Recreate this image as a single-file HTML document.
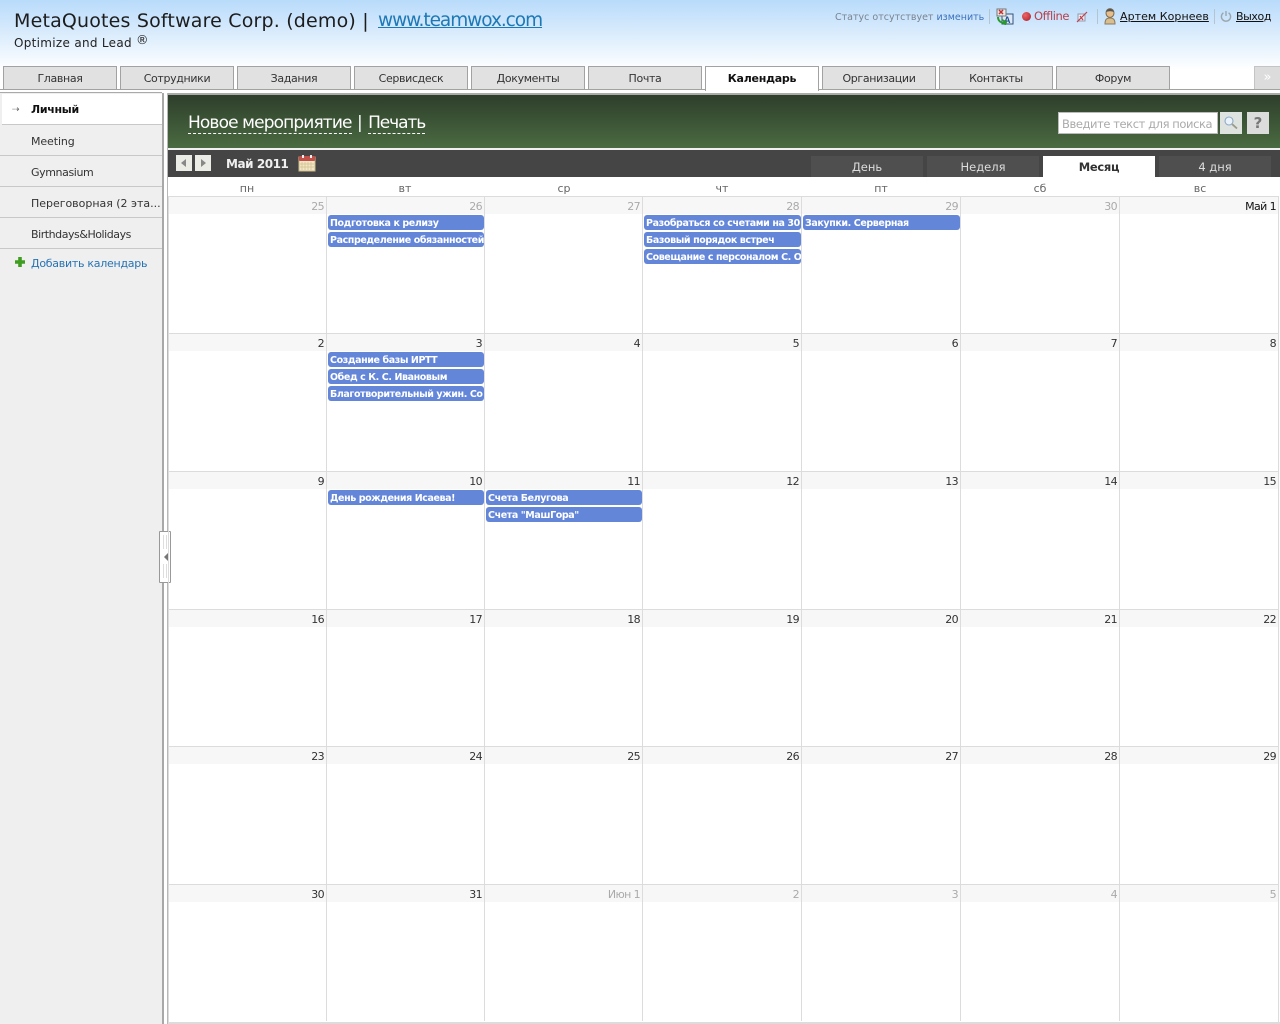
<!DOCTYPE html>
<html><head><meta charset="utf-8"><title>Calendar</title>
<style>
html,body{margin:0;padding:0;background:#fff;width:1280px;height:1024px;overflow:hidden}
body{position:relative;font-family:"DejaVu Sans","Liberation Sans",sans-serif;font-size:11px;color:#222}
.a,.t,.n,.e,.l,.s,.w,.m{position:absolute;white-space:nowrap}
.t{top:66px;width:112px;height:22px;background:#e1e1e1;border:1px solid #a2a2a2;border-bottom:0;text-align:center;line-height:24px;font-size:11px;letter-spacing:-.35px;color:#333}
.n{font-size:11px;text-align:right;width:60px;line-height:14px;color:#333;letter-spacing:-.6px}
.g{color:#aaa}
.e{height:15px;background:#6486d9;border-radius:3px;color:#fff;font:bold 9.5px/17px "DejaVu Sans",sans-serif;letter-spacing:-.4px;overflow:hidden;padding-left:2px;box-sizing:border-box}
.l{background:#dcdcdc}
.s{left:169px;width:1109px;height:17px;background:#f7f7f7}
.w{top:182px;font-size:11px;line-height:14px;color:#666;text-align:center;width:60px}
.m{left:0;width:162px;height:31px;border-bottom:1px solid #c8c8c8;font-size:11px;line-height:34px;padding-left:31px;box-sizing:border-box;letter-spacing:-.1px;color:#333}
.d{position:absolute;top:156px;width:112px;height:21px;background:#4f4f4f;color:#ddd;text-align:center;line-height:22px;font-size:11.5px}
</style></head><body>
<div class="a" style="left:0;top:0;width:1280px;height:70px;background:linear-gradient(#b8dbfb 0,#d6eafc 30px,#fff 70px)"></div>
<div class="a" style="left:14px;top:9px;font-size:19px;line-height:24px;color:#1d1d1d;letter-spacing:.18px">MetaQuotes Software Corp. (demo) | </div>
<div class="a" style="left:378px;top:9px;font-size:18.500px;line-height:24px;letter-spacing:-1.05px;color:#1c79b6;text-decoration:underline">www.teamwox.com</div>
<div class="a" style="left:14px;top:31px;font-size:12px;line-height:24px;color:#222;letter-spacing:.3px">Optimize and Lead</div>
<div class="a" style="left:136px;top:32px;font-size:12.500px;line-height:16px;color:#222">®</div>

<div class="a" style="left:835px;top:11px;font-size:9.5px;line-height:14px;color:#7a8490">Статус отсутствует <span style="color:#3c72bd">изменить</span></div>
<div class="l" style="position:absolute;left:989px;top:9px;width:1px;height:15px;background:#b4c4d0"></div>
<svg class="a" style="left:996px;top:8px" width="18" height="17" viewBox="0 0 18 17"><rect x="6" y="6" width="11" height="10" fill="#dfe9f5" stroke="#33537c"/><text x="8" y="15" font-size="9" font-weight="bold" font-family="Liberation Sans" fill="#1d4f94">A</text><rect x="1" y="1" width="9" height="7" fill="#e8e8e8" stroke="#777"/><path d="M3 2l4 4M7 2L3 6" stroke="#c83030" stroke-width="1.5"/><path d="M2 9c0 4 3 6 7 6l-1-2 2 1-1 3" fill="none" stroke="#2a9a2a" stroke-width="2"/></svg>
<div class="a" style="left:1022px;top:12px;width:9px;height:9px;border-radius:50%;background:radial-gradient(circle at 35% 35%,#e66,#a81c28)"></div>
<div class="a" style="left:1034px;top:9px;font-size:11.5px;line-height:15px;color:#b8404c;letter-spacing:-.4px">Offline</div>
<svg class="a" style="left:1076px;top:11px" width="12" height="12" viewBox="0 0 12 12"><path d="M2 3h7v7H2z" fill="#e8eef5" stroke="#99a"/><path d="M1 11L11 1M4 5l3 4" stroke="#c0404c" stroke-width="1.2" fill="none"/></svg>
<div class="a" style="left:1097px;top:9px;width:1px;height:15px;background:#b4c4d0"></div>
<svg class="a" style="left:1103px;top:8px" width="14" height="17" viewBox="0 0 14 17"><ellipse cx="7" cy="5" rx="4" ry="4.4" fill="#e8bd8c" stroke="#7a6a50"/><path d="M3 4c1-4 7-4 8 0-3-1-5-1-8 0z" fill="#555"/><path d="M2 16c0-5 2-6 5-6s5 1 5 6z" fill="#d9bf8f" stroke="#8a7a60"/></svg>
<div class="a" style="left:1120px;top:10px;font-size:11px;line-height:14px;color:#111;text-decoration:underline;letter-spacing:.05px">Артем Корнеев</div>
<div class="a" style="left:1214px;top:9px;width:1px;height:15px;background:#b4c4d0"></div>
<svg class="a" style="left:1220px;top:10px" width="12" height="12" viewBox="0 0 12 12"><path d="M3.4 2.8a4.6 4.6 0 1 0 5.2 0" fill="none" stroke="#9aa6ad" stroke-width="1.4"/><path d="M6 1v5" stroke="#9aa6ad" stroke-width="1.4"/></svg>
<div class="a" style="left:1236px;top:10px;font-size:11px;line-height:14px;color:#111;text-decoration:underline;letter-spacing:-.4px">Выход</div>

<div class="t" style="left:3px">Главная</div>
<div class="t" style="left:120px">Сотрудники</div>
<div class="t" style="left:237px">Задания</div>
<div class="t" style="left:354px">Сервисдеск</div>
<div class="t" style="left:471px">Документы</div>
<div class="t" style="left:588px">Почта</div>
<div class="t" style="left:822px">Организации</div>
<div class="t" style="left:939px">Контакты</div>
<div class="t" style="left:1056px">Форум</div>
<div class="a" style="left:0;top:89px;width:1280px;height:1px;background:#a2a2a2"></div>
<div class="t" style="left:705px;height:24px;background:#fff;font-weight:bold;color:#111;letter-spacing:-.25px">Календарь</div>
<div class="a" style="left:1254px;top:66px;width:25px;height:22px;background:#dcdcdc;border:1px solid #c4c4c4;border-right:0;border-bottom:0;text-align:center;color:#fff;font-size:13px;line-height:22px">»</div>

<div class="a" style="left:0;top:93px;width:162px;height:931px;background:#efefef"></div>
<div class="a" style="left:162px;top:93px;width:2px;height:931px;background:#a8a8a8"></div>
<div class="a" style="left:167px;top:93px;width:1px;height:931px;background:#b8b8b8"></div>
<div class="a" style="left:164px;top:93px;width:3px;height:931px;background:#fff"></div>
<div class="a" style="left:168px;top:93px;width:1112px;height:2px;background:#aaa"></div>
<div class="a" style="left:0;top:92px;width:162px;height:1px;background:#aaa"></div>

<div class="m" style="top:94px;left:2px;width:160px;background:#fff;font-weight:bold;padding-left:29px;color:#111;letter-spacing:-.3px;line-height:31px">Личный</div>
<div class="a" style="left:12px;top:103px;font-size:9px;line-height:14px;color:#666">⇢</div>
<div class="m" style="top:125px">Meeting</div>
<div class="m" style="top:156px;letter-spacing:-.4px">Gymnasium</div>
<div class="m" style="top:187px;letter-spacing:-.02px">Переговорная (2 эта...</div>
<div class="m" style="top:218px;letter-spacing:-.45px">Birthdays&amp;Holidays</div>
<div class="a" style="left:31px;top:250px;font-size:11px;line-height:28px;color:#2673b5;letter-spacing:-.27px">Добавить календарь</div>
<svg class="a" style="left:15px;top:257px" width="10" height="10" viewBox="0 0 10 10"><path d="M3.2 0h3.6v3.2H10v3.6H6.800V10H3.200V6.800H0V3.200h3.200z" fill="#3f9e1f"/></svg>

<div class="a" style="left:159px;top:531px;width:10px;height:50px;background:#fff;border:1px solid #999;border-radius:1px"></div>
<div class="a" style="left:164px;top:553px;width:0;height:0;border:4px solid transparent;border-left:0;border-right:4px solid #777"></div>
<div class="a" style="left:163px;top:535px;width:1px;height:14px;background:#ddd"></div>
<div class="a" style="left:166px;top:535px;width:1px;height:14px;background:#ddd"></div>
<div class="a" style="left:163px;top:564px;width:1px;height:14px;background:#ddd"></div>
<div class="a" style="left:166px;top:564px;width:1px;height:14px;background:#ddd"></div>

<div class="a" style="left:168px;top:95px;width:1112px;height:53px;background:linear-gradient(#2e3e2b,#4a6b41)"></div>
<div class="a" style="left:188px;top:111px;font-size:17px;line-height:24px;color:#fff;letter-spacing:-.88px"><span style="border-bottom:1px dashed #fff">Новое мероприятие</span><span style="letter-spacing:0"> | </span><span style="border-bottom:1px dashed #fff;letter-spacing:-1.1px">Печать</span></div>
<div class="a" style="left:1058px;top:112px;width:155px;height:20px;background:#fff;border:1px solid #bbb;padding-left:3px;font-size:11.5px;line-height:23px;color:#aaa;letter-spacing:-.42px;overflow:hidden">Введите текст для поиска</div>
<div class="a" style="left:1220px;top:112px;width:22px;height:22px;background:#dfe3e0"></div>
<svg class="a" style="left:1222px;top:114px" width="18" height="18" viewBox="0 0 18 18"><circle cx="7" cy="7" r="4" fill="#eaf3fb" stroke="#8fa9c4" stroke-width="1.100"/><path d="M10.200 10.200l4.800 4.300" stroke="#9a9a8a" stroke-width="1.800"/></svg>
<div class="a" style="left:1247px;top:112px;width:22px;height:22px;background:#dcdcdc;text-align:center;font-weight:bold;font-size:15px;line-height:22px;color:#777">?</div>

<div class="a" style="left:168px;top:148px;width:1112px;height:2px;background:#f0f0f0"></div>
<div class="a" style="left:168px;top:150px;width:1112px;height:27px;background:#454545"></div>
<div class="a" style="left:176px;top:155px;width:16px;height:16px;background:#ecece6"></div>
<div class="a" style="left:181px;top:159px;width:0;height:0;border:4px solid transparent;border-left:0;border-right:5px solid #888"></div>
<div class="a" style="left:195px;top:155px;width:16px;height:16px;background:#ecece6"></div>
<div class="a" style="left:201px;top:159px;width:0;height:0;border:4px solid transparent;border-right:0;border-left:5px solid #888"></div>
<div class="a" style="left:226px;top:157px;font-weight:bold;font-size:12px;line-height:15px;color:#f0f0f0;letter-spacing:-.45px">Май 2011</div>
<svg class="a" style="left:298px;top:154px" width="18" height="18" viewBox="0 0 18 18"><rect x="1" y="3" width="16" height="14" fill="#f2e6c4" stroke="#c9b98a"/><rect x="1" y="2" width="16" height="5" rx="1" fill="#c2504a"/><path d="M5 1v3M13 1v3" stroke="#eee" stroke-width="2"/><path d="M4 8v8M7 8v8M10 8v8M13 8v8M2 10h14M2 13h14" stroke="#d0c090" stroke-width=".7"/></svg>
<div class="d" style="left:811px">День</div>
<div class="d" style="left:927px">Неделя</div>
<div class="d" style="left:1043px;background:#fff;color:#333;font-weight:bold;letter-spacing:-.3px">Месяц</div>
<div class="d" style="left:1159px">4 дня</div>

<div class="w" style="left:217px">пн</div><div class="w" style="left:375px">вт</div><div class="w" style="left:534px">ср</div><div class="w" style="left:692px">чт</div><div class="w" style="left:851px">пт</div><div class="w" style="left:1010px">сб</div><div class="w" style="left:1170px">вс</div>

<div class="s" style="top:197px"></div><div class="s" style="top:334px"></div><div class="s" style="top:472px"></div><div class="s" style="top:610px"></div><div class="s" style="top:747px"></div><div class="s" style="top:885px"></div>
<div class="l" style="position:absolute;left:168px;top:196px;width:1111px;height:1px"></div>
<div class="l" style="position:absolute;left:168px;top:333px;width:1111px;height:1px"></div>
<div class="l" style="position:absolute;left:168px;top:471px;width:1111px;height:1px"></div>
<div class="l" style="position:absolute;left:168px;top:609px;width:1111px;height:1px"></div>
<div class="l" style="position:absolute;left:168px;top:746px;width:1111px;height:1px"></div>
<div class="l" style="position:absolute;left:168px;top:884px;width:1111px;height:1px"></div>
<div class="l" style="position:absolute;left:168px;top:1022px;width:1112px;height:2px"></div>
<div class="l" style="position:absolute;left:168px;top:196px;width:1px;height:827px"></div>
<div class="l" style="position:absolute;left:326px;top:196px;width:1px;height:825px"></div>
<div class="l" style="position:absolute;left:484px;top:196px;width:1px;height:825px"></div>
<div class="l" style="position:absolute;left:642px;top:196px;width:1px;height:825px"></div>
<div class="l" style="position:absolute;left:801px;top:196px;width:1px;height:825px"></div>
<div class="l" style="position:absolute;left:960px;top:196px;width:1px;height:825px"></div>
<div class="l" style="position:absolute;left:1119px;top:196px;width:1px;height:825px"></div>
<div class="l" style="position:absolute;left:1278px;top:196px;width:1px;height:827px"></div>

<div class="n g" style="left:264px;top:200px">25</div><div class="n g" style="left:422px;top:200px">26</div><div class="n g" style="left:580px;top:200px">27</div><div class="n g" style="left:739px;top:200px">28</div><div class="n g" style="left:898px;top:200px">29</div><div class="n g" style="left:1057px;top:200px">30</div><div class="n" style="left:1216px;top:200px;color:#111">Май 1</div>
<div class="n" style="left:264px;top:337px">2</div><div class="n" style="left:422px;top:337px">3</div><div class="n" style="left:580px;top:337px">4</div><div class="n" style="left:739px;top:337px">5</div><div class="n" style="left:898px;top:337px">6</div><div class="n" style="left:1057px;top:337px">7</div><div class="n" style="left:1216px;top:337px">8</div>
<div class="n" style="left:264px;top:475px">9</div><div class="n" style="left:422px;top:475px">10</div><div class="n" style="left:580px;top:475px">11</div><div class="n" style="left:739px;top:475px">12</div><div class="n" style="left:898px;top:475px">13</div><div class="n" style="left:1057px;top:475px">14</div><div class="n" style="left:1216px;top:475px">15</div>
<div class="n" style="left:264px;top:613px">16</div><div class="n" style="left:422px;top:613px">17</div><div class="n" style="left:580px;top:613px">18</div><div class="n" style="left:739px;top:613px">19</div><div class="n" style="left:898px;top:613px">20</div><div class="n" style="left:1057px;top:613px">21</div><div class="n" style="left:1216px;top:613px">22</div>
<div class="n" style="left:264px;top:750px">23</div><div class="n" style="left:422px;top:750px">24</div><div class="n" style="left:580px;top:750px">25</div><div class="n" style="left:739px;top:750px">26</div><div class="n" style="left:898px;top:750px">27</div><div class="n" style="left:1057px;top:750px">28</div><div class="n" style="left:1216px;top:750px">29</div>
<div class="n" style="left:264px;top:888px">30</div><div class="n" style="left:422px;top:888px">31</div><div class="n g" style="left:580px;top:888px">Июн 1</div><div class="n g" style="left:739px;top:888px">2</div><div class="n g" style="left:898px;top:888px">3</div><div class="n g" style="left:1057px;top:888px">4</div><div class="n g" style="left:1216px;top:888px">5</div>

<div class="e" style="left:328px;top:215px;width:156px">Подготовка к релизу</div>
<div class="e" style="left:328px;top:232px;width:156px">Распределение обязанностей</div>
<div class="e" style="left:644px;top:215px;width:157px">Разобраться со счетами на 30</div>
<div class="e" style="left:644px;top:232px;width:157px">Базовый порядок встреч</div>
<div class="e" style="left:644px;top:249px;width:157px">Совещание с персоналом С. О</div>
<div class="e" style="left:803px;top:215px;width:157px">Закупки. Серверная</div>
<div class="e" style="left:328px;top:352px;width:156px">Создание базы ИРТТ</div>
<div class="e" style="left:328px;top:369px;width:156px">Обед с К. С. Ивановым</div>
<div class="e" style="left:328px;top:386px;width:156px">Благотворительный ужин. Со</div>
<div class="e" style="left:328px;top:490px;width:156px">День рождения Исаева!</div>
<div class="e" style="left:486px;top:490px;width:156px">Счета Белугова</div>
<div class="e" style="left:486px;top:507px;width:156px">Счета "МашГора"</div>
</body></html>
